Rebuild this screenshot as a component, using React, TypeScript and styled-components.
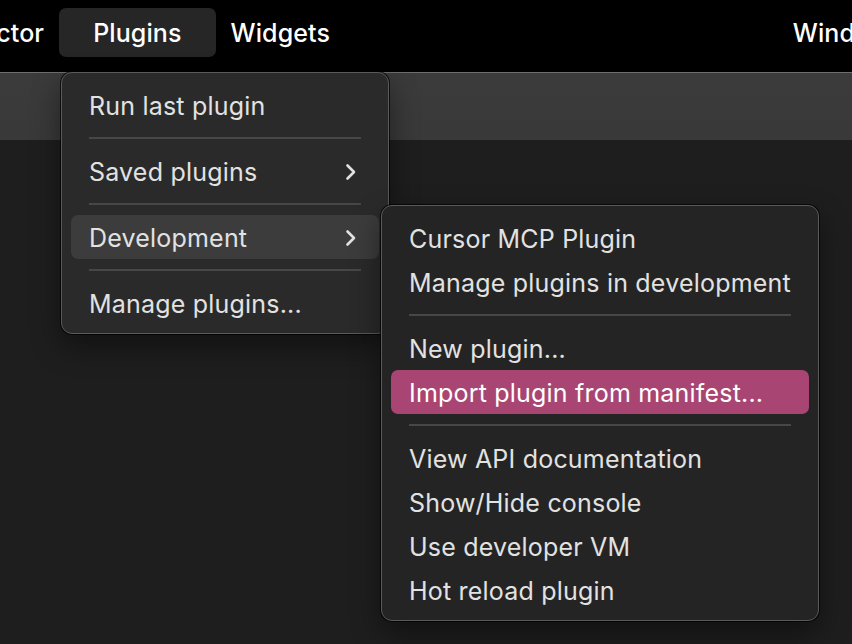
import { createGlobalStyle, styled } from "styled-components";

const GlobalStyle = createGlobalStyle`
  html, body {
    margin: 0;
    padding: 0;
    background: #1e1e1e;
  }
  body {
    font-family: Inter, "Noto Sans", "Liberation Sans", sans-serif;
    -webkit-font-smoothing: antialiased;
  }
`;

const Screen = styled.div`
  position: relative;
  width: 852px;
  height: 644px;
  overflow: hidden;
  display: flex;
  flex-direction: column;
  background: #1e1e1e;
`;

const MenuBar = styled.div`
  height: 72px;
  flex-shrink: 0;
  background: #000;
  display: flex;
  align-items: flex-start;
  padding-top: 8px;
  box-sizing: border-box;
  white-space: nowrap;
`;

const BarItem = styled.div<{ $active?: boolean; $offset?: number }>`
  height: 49px;
  display: flex;
  align-items: center;
  padding: 0 34px;
  margin-left: ${(p) => p.$offset ?? 0}px;
  border-radius: 7px;
  background: ${(p) => (p.$active ? "#262626" : "transparent")};
  color: #fff;
  font-size: 25px;
  font-weight: 500;
  letter-spacing: 0.1px;
`;

const BarSpacer = styled.div`
  flex: 1;
`;

const Toolbar = styled.div`
  height: 67px;
  flex-shrink: 0;
  background: linear-gradient(#3b3b3b, #393939);
  border-top: 1px solid #6e6e6e;
`;

const Canvas = styled.div`
  flex: 1;
  background: #1e1e1e;
`;

const Menu = styled.div<{ $left: number; $top: number; $width: number; $bg: string }>`
  position: absolute;
  left: ${(p) => p.$left}px;
  top: ${(p) => p.$top}px;
  width: ${(p) => p.$width}px;
  box-sizing: border-box;
  padding: 10px 9px 8px;
  background: ${(p) => p.$bg};
  border: 1px solid #5a5a5a;
  border-radius: 11px;
  box-shadow: 0 0 0 1px rgba(0, 0, 0, 0.7), 0 12px 30px rgba(0, 0, 0, 0.45);
  display: flex;
  flex-direction: column;
`;

const Item = styled.div<{ $state?: "hover" | "selected" }>`
  height: 44px;
  display: flex;
  align-items: center;
  justify-content: space-between;
  padding: 1px 22px 0 18px;
  box-sizing: border-box;
  border-radius: 7px;
  font-size: 25px;
  letter-spacing: 0.2px;
  color: ${(p) => (p.$state === "selected" ? "#ffffff" : "#e2e2e2")};
  background: ${(p) =>
    p.$state === "selected" ? "#a94572" : p.$state === "hover" ? "#3c3c3c" : "transparent"};
  white-space: nowrap;
`;

const Separator = styled.div`
  height: 2px;
  margin: 10px 18px 10px 18px;
  background: #474747;
`;

const Chevron = () => (
  <svg width="12" height="18" viewBox="0 0 12 18" fill="none">
    <path d="M2.5 2.5 L9 9 L2.5 15.5" stroke="#e2e2e2" strokeWidth="2.6" strokeLinecap="round" strokeLinejoin="round" />
  </svg>
);

export default function App() {
  return (
    <>
      <GlobalStyle />
      <Screen>
        <MenuBar>
          <BarItem $offset={-69}>Vector</BarItem>
          <BarItem $active $offset={-19}>Plugins</BarItem>
          <BarItem $offset={-19}>Widgets</BarItem>
          <BarSpacer />
          <BarItem style={{ marginRight: -37 }}>Wind</BarItem>
        </MenuBar>
        <Toolbar />
        <Canvas />

        <Menu $left={61} $top={72} $width={328} $bg="#2a2a2a">
          <Item>Run last plugin</Item>
          <Separator />
          <Item>
            Saved plugins
            <Chevron />
          </Item>
          <Separator />
          <Item $state="hover">
            Development
            <Chevron />
          </Item>
          <Separator />
          <Item>Manage plugins...</Item>
        </Menu>

        <Menu $left={381} $top={205} $width={438} $bg="#242424">
          <Item>Cursor MCP Plugin</Item>
          <Item>Manage plugins in development</Item>
          <Separator />
          <Item>New plugin...</Item>
          <Item $state="selected">Import plugin from manifest...</Item>
          <Separator />
          <Item>View API documentation</Item>
          <Item>Show/Hide console</Item>
          <Item>Use developer VM</Item>
          <Item>Hot reload plugin</Item>
        </Menu>
      </Screen>
    </>
  );
}
